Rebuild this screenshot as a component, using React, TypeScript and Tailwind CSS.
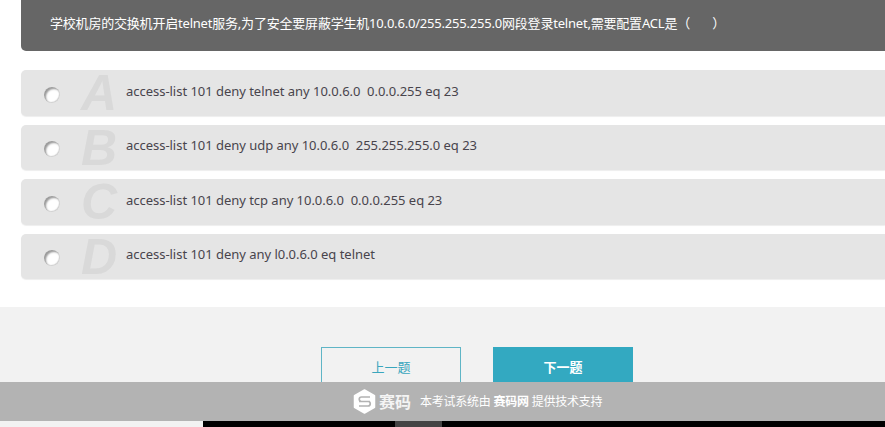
const options = [
  { letter: "A", text: "access-list 101 deny telnet any 10.0.6.0  0.0.0.255 eq 23", h: "h-[46px]", t: "-mt-[3px]" },
  { letter: "B", text: "access-list 101 deny udp any 10.0.6.0  255.255.255.0 eq 23", h: "h-[45px]", t: "-mt-[4px]" },
  { letter: "C", text: "access-list 101 deny tcp any 10.0.6.0  0.0.0.255 eq 23", h: "h-[46px]", t: "-mt-[3px]" },
  { letter: "D", text: "access-list 101 deny any l0.0.6.0 eq telnet", h: "h-[45px]", t: "-mt-[4px]" },
];

const font = "font-['Noto_Sans','Noto_Sans_CJK_SC',sans-serif]";

function Option({ letter, text, h, t }: { letter: string; text: string; h: string; t: string }) {
  return (
    <div className={`${h} flex items-center rounded-l-[5px] bg-[#e5e5e5] shadow-[0_1px_1px_#eeeeee]`}>
      <span className="ml-[23px] mt-[3px] h-[16px] w-[16px] shrink-0 rounded-full bg-white shadow-[inset_2px_2px_2px_#9a9a9a,inset_-1px_-1px_1px_#cfcfcf]" />
      <span className="ml-[16px] w-[46px] shrink-0 text-center font-['Liberation_Sans',sans-serif] text-[50px] font-bold italic leading-none text-[#d9d9d9]">
        {letter}
      </span>
      <span className={`${t} ml-[4px] whitespace-pre text-[13px] tracking-[-0.03px] text-[#48444c]`}>{text}</span>
    </div>
  );
}

export default function App() {
  return (
    <div className={`relative h-[427px] w-[885px] overflow-hidden bg-white ${font}`}>
      <div className="ml-[21px] flex h-[51px] items-center rounded-bl-[5px] bg-[#666666] pb-[4px] pl-[29px]">
        <p className="whitespace-pre text-[13px] tracking-[-0.2px] text-white">
          学校机房的交换机开启telnet服务,为了安全要屏蔽学生机10.0.6.0/255.255.255.0网段登录telnet,需要配置ACL是（       ）
        </p>
      </div>

      <div className="ml-[21px] mt-[19px] flex flex-col gap-[9px]">
        {options.map((o) => (
          <Option key={o.letter} {...o} />
        ))}
      </div>

      <div className="mt-[28px] flex h-[120px] gap-[32px] bg-[#f2f2f2] pl-[321px] pt-[40px]">
        <button className="flex h-[75px] w-[140px] justify-center border border-[#5fb5c6] pt-[10px] text-[13px] text-[#3aa6bd]">
          上一题
        </button>
        <button className="flex h-[75px] w-[140px] justify-center bg-[#33a9c1] pt-[11px] text-[13px] font-bold text-white">
          下一题
        </button>
      </div>

      <div className="absolute inset-x-0 top-[382px] flex h-[39px] items-center bg-[#b3b3b3] pl-[353px] text-white">
        <svg width="23" height="25" viewBox="0 0 23 25" className="mr-[3px]">
          <path d="M11.500 1 21.500 6.700v11.600L11.500 24 1.500 18.300V6.700z" fill="#fff" stroke="#fff" strokeWidth="1.500" strokeLinejoin="round" />
          <path d="M17 8H8.500a2.200 2.200 0 0 0 0 4.500H15a2.200 2.200 0 0 1 0 4.500H6M6 12.500h11" fill="none" stroke="#b3b3b3" strokeWidth="1.700" />
        </svg>
        <span className="text-[16px] font-bold text-[#f4f4f4]">赛码</span>
        <span className="ml-[9px] text-[12px] tracking-[-0.25px]">本考试系统由</span>
        <span className="ml-[3px] text-[12px] font-bold tracking-[-0.25px]">赛码网</span>
        <span className="ml-[3px] text-[12px] tracking-[-0.25px]">提供技术支持</span>
      </div>

      <div className="absolute inset-x-0 bottom-0 flex h-[6px]">
        <div className="w-[203px] bg-[#f2f2f2]" />
        <div className="w-[192px] bg-black" />
        <div className="w-[47px] bg-[#444444]" />
        <div className="flex-1 bg-black" />
      </div>
    </div>
  );
}
